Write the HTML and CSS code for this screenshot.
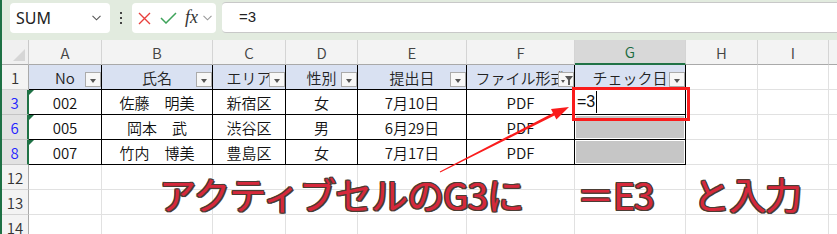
FILE: index.html
```html
<!DOCTYPE html>
<html lang="ja">
<head>
<meta charset="utf-8">
<title>Excel</title>
<link rel="stylesheet" href="styles.css">
</head>
<body>
<div class="app">
  <div class="toolbar">
    <div class="namebox">
      <span class="nb-text">SUM</span>
      <svg class="nb-chev" width="9" height="6" viewBox="0 0 9 6"><path d="M0.5 0.8 L4.5 4.8 L8.5 0.8" fill="none" stroke="#555" stroke-width="1.1"/></svg>
    </div>
    <div class="kebab"><i></i><i></i><i></i></div>
    <div class="fbtns">
      <svg class="ic-x" width="13" height="13" viewBox="0 0 13 13"><path d="M1 1 L12 12 M12 1 L1 12" stroke="#e8403d" stroke-width="1.4" fill="none"/></svg>
      <svg class="ic-ok" width="17" height="12" viewBox="0 0 17 12"><path d="M1 6 L6 11 L16 1" stroke="#3ea35a" stroke-width="1.5" fill="none"/></svg>
      <span class="fx">fx</span>
      <svg class="fx-chev" width="9" height="6" viewBox="0 0 9 6"><path d="M0.5 0.8 L4.5 4.8 L8.5 0.8" fill="none" stroke="#999" stroke-width="1.1"/></svg>
    </div>
    <div class="finput">=3</div>
  </div>

  <div class="sheet">
    <div class="corner"><svg width="12" height="12" viewBox="0 0 12 12"><path d="M12 0 L12 12 L0 12 Z" fill="#d6d6d6"/></svg></div>
    <div class="ch">A</div>
    <div class="ch">B</div>
    <div class="ch">C</div>
    <div class="ch">D</div>
    <div class="ch">E</div>
    <div class="ch">F</div>
    <div class="ch sel">G</div>
    <div class="ch">H</div>
    <div class="ch">I</div>
    <div class="ch last"></div>

    <div class="rh">1</div>
    <div class="c t th first">No<span class="fb"></span></div>
    <div class="c t th">氏名<span class="fb"></span></div>
    <div class="c t th">エリア<span class="fb"></span></div>
    <div class="c t th">性別<span class="fb"></span></div>
    <div class="c t th">提出日<span class="fb"></span></div>
    <div class="c t th">ファイル形式<span class="fb filt"></span></div>
    <div class="c t th">チェック日<span class="fb"></span></div>
    <div class="c"></div>
    <div class="c"></div>
    <div class="c last"></div>

    <div class="rh fr">3</div>
    <div class="c t first tri">002</div>
    <div class="c t">佐藤　明美</div>
    <div class="c t">新宿区</div>
    <div class="c t">女</div>
    <div class="c t">7月10日</div>
    <div class="c t">PDF</div>
    <div class="c t edit"><span class="etext">=3</span><span class="caret"></span></div>
    <div class="c"></div>
    <div class="c"></div>
    <div class="c last"></div>

    <div class="rh fr">6</div>
    <div class="c t first tri">005</div>
    <div class="c t">岡本　武</div>
    <div class="c t">渋谷区</div>
    <div class="c t">男</div>
    <div class="c t">6月29日</div>
    <div class="c t">PDF</div>
    <div class="c t shade"></div>
    <div class="c"></div>
    <div class="c"></div>
    <div class="c last"></div>

    <div class="rh fr">8</div>
    <div class="c t first tri">007</div>
    <div class="c t">竹内　博美</div>
    <div class="c t">豊島区</div>
    <div class="c t">女</div>
    <div class="c t">7月17日</div>
    <div class="c t">PDF</div>
    <div class="c t shade"></div>
    <div class="c"></div>
    <div class="c"></div>
    <div class="c last"></div>

    <div class="rh">12</div>
    <div class="c"></div><div class="c"></div><div class="c"></div><div class="c"></div><div class="c"></div><div class="c"></div><div class="c"></div><div class="c"></div><div class="c"></div><div class="c last"></div>

    <div class="rh">13</div>
    <div class="c"></div><div class="c"></div><div class="c"></div><div class="c"></div><div class="c"></div><div class="c"></div><div class="c"></div><div class="c"></div><div class="c"></div><div class="c last"></div>

    <div class="rh">14</div>
    <div class="c"></div><div class="c"></div><div class="c"></div><div class="c"></div><div class="c"></div><div class="c"></div><div class="c"></div><div class="c"></div><div class="c"></div><div class="c last"></div>
  </div>
</div>

<svg class="marks" width="837" height="234" viewBox="0 0 837 234">
  <rect x="573.5" y="88.5" width="115" height="31" fill="none" stroke="#fa1c1c" stroke-width="3"/>
  <polygon points="440.2,172.5 554.4,115.5 556.4,119.5 569,107 551,108.9 553,112.9 439.8,171.5" fill="#fa1c1c"/>
</svg>

<div class="callout">
  <span class="co1">アクティブセルのG3に</span>
  <span class="co2">＝E3</span>
  <span class="co3">と入力</span>
</div>
</body>
</html>
```

FILE: styles.css
```css
* { box-sizing: border-box; }

html, body {
  margin: 0;
  padding: 0;
  background: #ffffff;
  overflow: hidden;
}

body {
  width: 837px;
  height: 234px;
  position: relative;
  font-family: "Noto Sans CJK JP", "Noto Sans", sans-serif;
}

.app {
  border-left: 2px solid #1e7145;
  height: 234px;
  display: flex;
  flex-direction: column;
}

/* ---------- toolbar ---------- */
.toolbar {
  height: 40px;
  flex: none;
  background: #e2ebdf;
  display: flex;
  align-items: flex-start;
  padding-top: 3px;
}

.namebox {
  margin-left: 8px;
  width: 100px;
  height: 30px;
  background: #fff;
  border-radius: 4px;
  display: flex;
  align-items: center;
  justify-content: space-between;
  padding: 0 9px 0 6px;
}

.nb-text {
  font-family: "Noto Sans", "Liberation Sans", sans-serif;
  font-size: 16px;
  color: #222;
}

.kebab {
  width: 22px;
  height: 30px;
  display: flex;
  flex-direction: column;
  align-items: center;
  justify-content: center;
  gap: 3px;
}

.kebab i {
  display: block;
  width: 2px;
  height: 2px;
  background: #444;
}

.fbtns {
  width: 84px;
  height: 30px;
  background: #fff;
  border-radius: 4px;
  display: flex;
  align-items: center;
  padding-left: 6px;
}

.ic-x { margin-right: 9px; }
.ic-ok { margin-right: 8px; }

.fx {
  font-family: "Liberation Serif", "DejaVu Serif", serif;
  font-style: italic;
  font-size: 18px;
  color: #333;
  line-height: 1;
  margin-top: -2px;
  margin-right: 5px;
}

.finput {
  flex: 1;
  margin-left: 6px;
  height: 31px;
  margin-top: -1px;
  background: #fff;
  border-top: 1px solid #c8c8c8;
  border-bottom: 1px solid #c8c8c8;
  border-radius: 4px 0 0 4px;
  padding-left: 17px;
  font-family: "Liberation Sans", sans-serif;
  font-size: 15px;
  line-height: 28px;
  color: #222;
}

/* ---------- sheet ---------- */
.sheet {
  display: grid;
  grid-template-columns: 27px 73px 111px 73px 72px 109px 108px 111px 72px 71px 1fr;
  grid-auto-rows: 25px;
  font-size: 15px;
  font-weight: 350;
  color: #111;
}

.sheet > div {
  display: flex;
  align-items: center;
  justify-content: center;
  white-space: nowrap;
  overflow: hidden;
  position: relative;
}

.corner {
  background: #f0f0f0;
  border-right: 1px solid #c9c9c9;
  border-bottom: 1px solid #a9a9a9;
  align-items: flex-end !important;
  justify-content: flex-end !important;
  padding: 0 3px 3px 0;
}

.ch {
  background: #f3f3f3;
  border-right: 1px solid #d4d4d4;
  border-bottom: 1px solid #a9a9a9;
  color: #444;
  font-size: 15px;
}

.ch.sel {
  background: #d8d8d8;
  border-bottom: 2px solid #217346;
  color: #1b6b3f;
}

.ch.last { border-right: none; }

.rh {
  background: #f3f3f3;
  border-right: 1px solid #a9a9a9;
  border-bottom: 1px solid #d4d4d4;
  color: #333;
  font-size: 15px;
}

.rh.fr {
  color: #2424ff;
  background: #e2e2e2;
  border-right: 2px solid #217346;
  border-bottom-color: #c4c4c4;
}

.c {
  border-right: 1px solid #e1e1e1;
  border-bottom: 1px solid #e1e1e1;
  background: #fff;
}

.c.last { border-right: none; }

.c.t {
  border-right: 1px solid #000;
  border-bottom: 1px solid #000;
}

.c.th {
  background: #d9e1f2;
  color: #222;
}

/* filter button */
.fb {
  position: absolute;
  right: 0;
  bottom: 2px;
  width: 16px;
  height: 15px;
  background: #f7f7f7;
  border: 1px solid #ababab;
}

.fb::after {
  content: "";
  position: absolute;
  left: 4px;
  top: 6px;
  border-left: 3.5px solid transparent;
  border-right: 3.5px solid transparent;
  border-top: 4px solid #555;
}

.fb.filt::after {
  left: 2px;
  top: 7px;
  border-left: 2px solid transparent;
  border-right: 2px solid transparent;
  border-top: 3px solid #555;
}

.fb.filt::before {
  content: "";
  position: absolute;
  left: 6px;
  top: 3px;
  width: 8px;
  height: 9px;
  background: #555;
  clip-path: polygon(0 0, 100% 0, 62% 45%, 62% 100%, 38% 100%, 38% 45%);
}

/* error indicator triangle */
.tri::before {
  content: "";
  position: absolute;
  left: 0;
  top: 0;
  border-top: 5px solid #1e7145;
  border-right: 5px solid transparent;
}

/* editing cell */
.c.edit {
  justify-content: flex-start;
  padding-left: 2px;
}

.etext {
  font-family: "Liberation Sans", sans-serif;
  font-size: 16px;
  color: #111;
}

.caret {
  width: 1px;
  height: 22px;
  background: #000;
  margin-left: 1px;
}

.c.shade {
  background: #c6c6c6;
  box-shadow: inset -1px -1px 0 #fff, inset 1px 1px 0 #fff;
}

/* ---------- overlays ---------- */
.marks {
  position: absolute;
  left: 0;
  top: 0;
  pointer-events: none;
}

.callout {
  position: absolute;
  left: 159px;
  top: 176px;
  display: flex;
  font-family: "Noto Sans CJK JP", sans-serif;
  font-weight: 400;
  font-size: 37px;
  line-height: 1;
  color: #d6283b;
  letter-spacing: -1px;
  white-space: nowrap;
  text-shadow:
    1px 0 0 #4b3c34, -1px 0 0 #4b3c34, 0 1px 0 #4b3c34, 0 -1px 0 #4b3c34,
    1px 1px 0 #4b3c34, -1px -1px 0 #4b3c34, 1px -1px 0 #4b3c34, -1px 1px 0 #4b3c34,
    2px 1px 0 #4b3c34;
}

.co1 { width: 418px; }
.co2 { width: 116px; }
```
